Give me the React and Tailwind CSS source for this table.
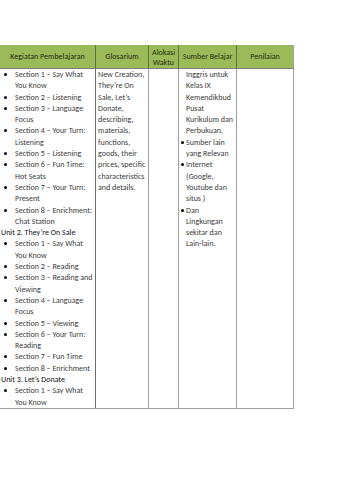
import React from 'react';

const kegiatan = [
  { unit: null, items: [
    ['Section 1 – Say What', 'You Know'],
    ['Section 2 – Listening'],
    ['Section 3 – Language', 'Focus'],
    ['Section 4 – Your Turn:', 'Listening'],
    ['Section 5 – Listening'],
    ['Section 6 – Fun Time:', 'Hot Seats'],
    ['Section 7 – Your Turn:', 'Present'],
    ['Section 8 – Enrichment:', 'Chat Station'],
  ] },
  { unit: 'Unit 2. They’re On Sale', items: [
    ['Section 1 – Say What', 'You Know'],
    ['Section 2 – Reading'],
    ['Section 3 – Reading and', 'Viewing'],
    ['Section 4 – Language', 'Focus'],
    ['Section 5 – Viewing'],
    ['Section 6 – Your Turn:', 'Reading'],
    ['Section 7 – Fun Time'],
    ['Section 8 – Enrichment'],
  ] },
  { unit: 'Unit 3. Let’s Donate', items: [
    ['Section 1 – Say What', 'You Know'],
  ] },
];

const glosarium = [
  'New Creation,', 'They’re On', 'Sale, Let’s', 'Donate,', 'describing,', 'materials,',
  'functions,', 'goods, their', 'prices, specific', 'characteristics', 'and details.',
];

const sumber = [
  { bullet: false, lines: ['Inggris untuk', 'Kelas IX', 'Kemendikbud', 'Pusat', 'Kurikulum dan', 'Perbukuan.'] },
  { bullet: true, lines: ['Sumber lain', 'yang Relevan'] },
  { bullet: true, lines: ['Internet', '(Google,', 'Youtube dan', 'situs )'] },
  { bullet: true, lines: ['Dan', 'Lingkungan', 'sekitar dan', 'Lain-lain.'] },
];

function Dot() {
  return <span className="block w-[3px] h-[3px] rounded-full bg-black mt-[4px]" />;
}

export default function App() {
  return (
    <div
      className="w-[339px] h-[480px] bg-white pt-[45px] text-[8px] leading-[11.3px] text-[#3b3b3b]"
      style={{ fontFamily: 'Carlito, Calibri, Lato, "Open Sans", sans-serif' }}
    >
      <div className="w-[294px]">
        {/* header */}
        <div className="flex h-[24px] bg-[#9bbb59] border-b border-[#7f7f7f] text-[#1f2a10]">
          <div className="w-[96px] flex items-center justify-center border-r border-[#5f6e3f]">Kegiatan Pembelajaran</div>
          <div className="w-[53px] flex items-center justify-center border-r border-[#5f6e3f]">Glosarium</div>
          <div className="w-[30px] flex flex-col items-center justify-center leading-[10px] border-r border-[#5f6e3f]">
            <span>Alokasi</span>
            <span>Waktu</span>
          </div>
          <div className="w-[58px] flex items-center justify-center border-r border-[#5f6e3f]">Sumber Belajar</div>
          <div className="w-[57px] flex items-center justify-center border-r border-[#a0a0a0]">Penilaian</div>
        </div>

        {/* body */}
        <div className="flex h-[340px] border-b border-[#a0a0a0]">
          <div className="w-[96px] border-r border-[#6b6b6b] pl-[1px] pt-[0px]">
            {kegiatan.map((g, gi) => (
              <div key={gi}>
                {g.unit && <div className="text-[#111]">{g.unit}</div>}
                {g.items.map((it, ii) => (
                  <div key={ii} className="flex">
                    <div className="w-[14px] pl-[3px]"><Dot /></div>
                    <div className="whitespace-nowrap">
                      {it.map((l, li) => <div key={li}>{l}</div>)}
                    </div>
                  </div>
                ))}
              </div>
            ))}
          </div>
          <div className="w-[53px] border-r border-[#a0a0a0] pl-[2px] whitespace-nowrap">
            {glosarium.map((l, i) => <div key={i}>{l}</div>)}
          </div>
          <div className="w-[30px] border-r border-[#a0a0a0]" />
          <div className="w-[58px] border-r border-[#a0a0a0] pl-[1px] whitespace-nowrap">
            {sumber.map((s, i) => (
              <div key={i} className="flex">
                <div className="w-[6px] pl-[1px]">{s.bullet && <Dot />}</div>
                <div>
                  {s.lines.map((l, li) => <div key={li}>{l}</div>)}
                </div>
              </div>
            ))}
          </div>
          <div className="w-[57px] border-r border-[#a0a0a0]" />
        </div>
      </div>
    </div>
  );
}
